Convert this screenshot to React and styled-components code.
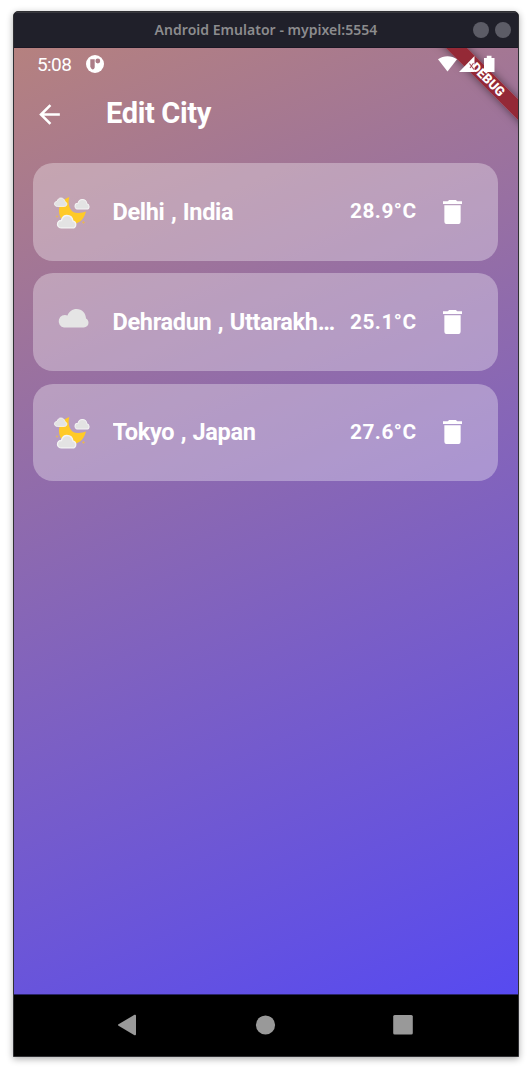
import React from 'react';
import styled, { createGlobalStyle } from 'styled-components';

const GlobalStyle = createGlobalStyle`
  * { box-sizing: border-box; }
  body { margin: 0; background: #fff; font-family: Roboto, sans-serif; }
`;

const Desktop = styled.div`
  width: 532px;
  height: 1073px;
  padding: 11px 13px 16px;
  overflow: hidden;
`;

const Window = styled.main`
  width: 506px;
  height: 1046px;
  display: flex;
  flex-direction: column;
  border: 1px solid #303034;
  border-radius: 5px 5px 0 0;
  background: #000;
  box-shadow: 0 2px 7px rgba(0, 0, 0, 0.32);
  overflow: hidden;
`;

const TitleBar = styled.header`
  flex: 0 0 36px;
  display: grid;
  grid-template-columns: 1fr auto 1fr;
  align-items: center;
  background: #20202a;
  border-top: 1px solid #38383e;
  border-bottom: 1px solid #1b1724;
  color: #8c8c8e;
  font: 600 14px/20px 'Noto Sans', sans-serif;
  letter-spacing: 0.03px;
`;

const WindowTitle = styled.span`
  grid-column: 2;
  white-space: nowrap;
`;

const WindowButtons = styled.div`
  display: flex;
  justify-content: flex-end;
  gap: 6px;
  padding-right: 7px;
`;

const WindowButton = styled.i`
  width: 16px;
  height: 16px;
  border-radius: 50%;
  background: #5c5c66;
`;

const Screen = styled.section`
  position: relative;
  flex: 0 0 947px;
  background: linear-gradient(157deg, #b5817f 0%, #574af0 100%);
  border-bottom: 1px solid #292466;
  color: #fff;
  overflow: hidden;
`;

const StatusBar = styled.div`
  position: relative;
  z-index: 2;
  height: 31px;
  display: flex;
  align-items: center;
  padding: 0 22px 0 23px;
`;

const Clock = styled.span`
  width: 49px;
  font-size: 19px;
  letter-spacing: -0.6px;
  line-height: 31px;
  padding-top: 1px;
`;

const StatusIcons = styled.svg`
  margin-left: auto;
`;

const Ribbon = styled.div`
  position: absolute;
  z-index: 1;
  top: 23.5px;
  right: -39.5px;
  width: 140px;
  height: 15px;
  transform: rotate(45deg);
  background: rgba(146, 30, 40, 0.87);
  box-shadow: 0 0 9px rgba(0, 0, 0, 0.5);
  text-align: center;
  font-size: 13px;
  font-weight: 900;
  line-height: 15px;
`;

const AppBar = styled.div`
  height: 71px;
  display: flex;
  align-items: center;
  padding: 0 20px 2px;
`;

const BackIcon = styled.svg`
  flex: none;
  margin: 1px 41px 0 0;
`;

const Heading = styled.h1`
  margin: 0 0 1px;
  font-size: 29px;
  line-height: 36px;
  font-weight: 700;
  letter-spacing: -0.35px;
`;

const CityList = styled.ul`
  list-style: none;
  margin: 0;
  padding: 13px 20px 0 19px;
  display: flex;
  flex-direction: column;
  gap: 12.8px;
`;

const CityCard = styled.li`
  height: 97.5px;
  display: flex;
  align-items: center;
  padding: 0 20px;
  border-radius: 20px;
  background: rgba(255, 255, 255, 0.32);
`;

const WeatherIcon = styled.svg`
  flex: none;
  margin-right: 19.5px;
`;

const CityName = styled.span`
  width: 226px;
  overflow: hidden;
  text-overflow: ellipsis;
  white-space: nowrap;
  font-size: 23.5px;
  line-height: 30px;
  font-weight: 700;
  letter-spacing: -0.32px;
  word-spacing: 0.9px;
`;

const Temperature = styled.span`
  margin-left: 11.5px;
  width: 92.5px;
  white-space: nowrap;
  font-size: 20.8px;
  line-height: 28px;
  font-weight: 700;
  letter-spacing: 0.5px;
  padding-bottom: 1px;
`;

const TrashIcon = styled.svg`
  flex: none;
`;

const NavBar = styled.nav`
  flex: 1;
  background: #000;
  display: flex;
  align-items: center;
  padding: 0 0 2px 103px;
`;

const puff = 'M5 15C2 15 0 13 0 10.5S2 6 4.6 6C5.7 2.5 8 0 11.3 0c4 0 6.8 2.6 7.3 6.6 2 .6 3.4 2.1 3.4 4.2 0 2.5-1.8 4.2-4.2 4.2z';

const Cloudlet = ({ at, scale }) => (
  <path d={puff} transform={`translate(${at}) scale(${scale})`} fill="#e3e3e3" stroke="#f4f4f4" strokeWidth="1.6" />
);

const NightIcon = () => (
  <WeatherIcon width="40" height="40" viewBox="0 0 40 40">
    <path d="M16.3 5C14.500 11 16 20.500 24 21c3.500.3 6.500-.3 9-1.400C31 27.500 26 32 19.500 32 11.500 32 6 26.500 6 19 6 12 10 7.500 16.300 5z" fill="#ffca28" />
    <path d="M4 23l.5 1 1 .5-1 .5-.5 1-.5-1-1-.5 1-.5zM30.500 28.700l.6 1.100 1.100.6-1.100.6-.6 1.100-.6-1.100-1.100-.6 1.100-.6z" fill="#e8b654" />
    <Cloudlet at="1.500 6" scale="0.56" />
    <Cloudlet at="22 7.500" scale="0.64" />
    <Cloudlet at="4.500 23.500" scale="0.83" />
  </WeatherIcon>
);

const CloudIcon = () => (
  <WeatherIcon width="40" height="40" viewBox="0 0 40 40">
    <path d="M11 25.500A6.300 6.300 0 1 1 14.500 13.500C16 9.500 19.500 7 23.500 7c5.500 0 9.300 4 9.500 9.500 1.700.8 2.500 2.500 2.500 4.300 0 2.700-2 4.700-4.700 4.700z" fill="#e5e5e5" />
  </WeatherIcon>
);

const cities = [
  { name: 'Delhi , India', temp: '28.9°C', Icon: NightIcon },
  { name: 'Dehradun , Uttarakh…', temp: '25.1°C', Icon: CloudIcon },
  { name: 'Tokyo , Japan', temp: '27.6°C', Icon: NightIcon },
];

export default function App() {
  return (
    <Desktop>
      <GlobalStyle />
      <Window>
        <TitleBar>
          <WindowTitle>Android Emulator - mypixel:5554</WindowTitle>
          <WindowButtons>
            <WindowButton />
            <WindowButton />
          </WindowButtons>
        </TitleBar>
        <Screen>
          <StatusBar>
            <Clock>5:08</Clock>
            <svg width="18" height="18" viewBox="0 0 18 18">
              <circle cx="9" cy="9" r="9" fill="#fff" />
              <path d="M4.300 4.200h4.400v8.300q-.4 2-2.200 2-2-1-2.200-3z" fill="#ac7c87" />
              <circle cx="11.800" cy="6" r="2.400" fill="#ac7c87" />
            </svg>
            <StatusIcons width="58" height="18" viewBox="0 0 58 18">
              <path d="M0 4.300C5.500.100 13.500.100 19 4.300L9.500 16.500z" fill="#fff" />
              <path d="M21 17L36.500 1V17z" fill="#fff" />
              <path d="M31.500 8.500l4.500 6M32 13l3.500-5" stroke="#a64b59" strokeWidth="1.100" />
              <path d="M46 3h2.800V.800h4.700V3H56.500V17H46z" fill="#fff" />
            </StatusIcons>
          </StatusBar>
          <AppBar>
            <BackIcon width="31" height="31" viewBox="0 0 24 24" fill="#fff">
              <path d="M20 11H7.830l5.590-5.590L12 4l-8 8 8 8 1.410-1.410L7.830 13H20v-2z" />
            </BackIcon>
            <Heading>Edit City</Heading>
          </AppBar>
          <CityList>
            {cities.map(({ name, temp, Icon }) => (
              <CityCard key={name}>
                <Icon />
                <CityName>{name}</CityName>
                <Temperature>{temp}</Temperature>
                <TrashIcon width="19" height="24" viewBox="5 3 14 18" preserveAspectRatio="none" fill="#fff">
                  <path d="M6 19c0 1.100.5 2 1.500 2h9c1 0 1.500-.9 1.500-2V7H6v12zM19 4h-3.500l-1-1h-5l-1 1H5v2h14V4z" />
                </TrashIcon>
              </CityCard>
            ))}
          </CityList>
          <Ribbon>DEBUG</Ribbon>
        </Screen>
        <NavBar>
          <svg width="298" height="22" viewBox="0 0 298 22" fill="#999">
            <path d="M1.500 10.300L17.500.8q1.500-.5 1.500 1v18.400q0 1.500-1.500 1L1.500 11.700q-1-.7 0-1.400z" />
            <circle cx="148.500" cy="11" r="9.600" />
            <rect x="276.200" y="1" width="19.600" height="19.600" rx="1.500" />
          </svg>
        </NavBar>
      </Window>
    </Desktop>
  );
}
